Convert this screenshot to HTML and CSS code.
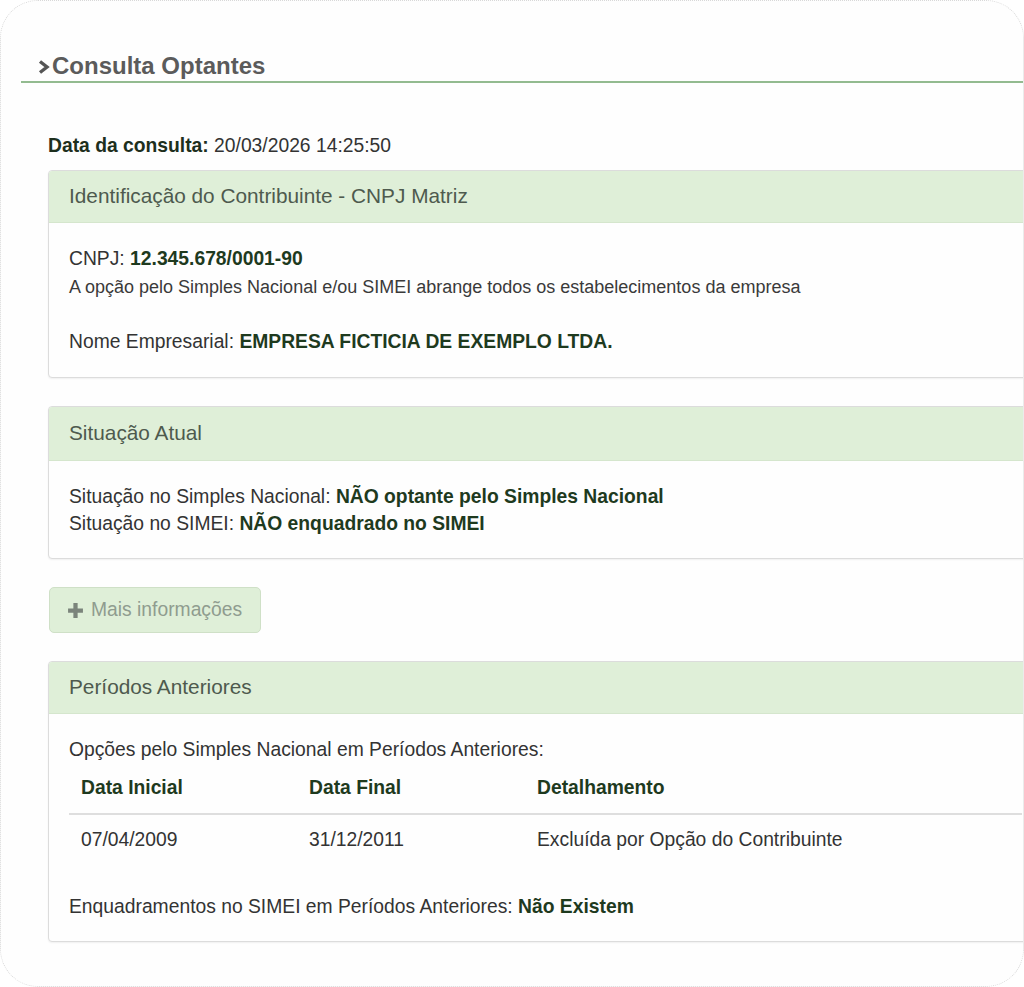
FILE: index.html
```html
<!doctype html>
<html>
  <head>
    <title>Consulta Optantes</title>
    <link rel="stylesheet" href="styles.css">
  </head>
  <body>
    <div class="frame">
      <h1 class="page-title">
        <svg class="chevron" width="12" height="16" viewBox="0 0 12 16"><path d="M2 2.5l7 5.5-7 5.5" fill="none" stroke="#555" stroke-width="3.4" stroke-linejoin="miter"/></svg>Consulta Optantes
      </h1>

      <div class="content">
        <p class="query-date"><b>Data da consulta:</b> 20/03/2026 14:25:50</p>

        <div class="panel">
          <div class="panel-heading">Identificação do Contribuinte - CNPJ Matriz</div>
          <div class="panel-body first">
            <p>CNPJ: <b>12.345.678/0001-90</b></p>
            <p class="note">A opção pelo Simples Nacional e/ou SIMEI abrange todos os estabelecimentos da empresa</p>
            <p class="spaced">Nome Empresarial: <b>EMPRESA FICTICIA DE EXEMPLO LTDA.</b></p>
          </div>
        </div>

        <div class="panel">
          <div class="panel-heading tall">Situação Atual</div>
          <div class="panel-body">
            <p>Situação no Simples Nacional: <b>NÃO optante pelo Simples Nacional</b></p>
            <p>Situação no SIMEI: <b>NÃO enquadrado no SIMEI</b></p>
          </div>
        </div>

        <button class="btn-more">
          <svg width="17" height="17" viewBox="0 0 16 16"><path d="M6 1h4v5h5v4h-5v5H6v-5H1V6h5z" fill="#7b847b"/></svg>
          Mais informações
        </button>

        <div class="panel">
          <div class="panel-heading">Períodos Anteriores</div>
          <div class="panel-body">
            <p>Opções pelo Simples Nacional em Períodos Anteriores:</p>
            <table class="periods">
              <thead>
                <tr><th>Data Inicial</th><th>Data Final</th><th>Detalhamento</th></tr>
              </thead>
              <tbody>
                <tr><td>07/04/2009</td><td>31/12/2011</td><td>Excluída por Opção do Contribuinte</td></tr>
              </tbody>
            </table>
            <p>Enquadramentos no SIMEI em Períodos Anteriores: <b>Não Existem</b></p>
          </div>
        </div>
      </div>
    </div>
  </body>
</html>
```

FILE: styles.css
```css
* { margin: 0; padding: 0; box-sizing: border-box; }
html, body { background: #fff; }
body { font: 19.3px "Liberation Sans", Arial, Helvetica, sans-serif; color: #333; overflow: hidden; }

.frame { height: 987px; width: 1024px; border: 1px dotted #d8d8d8; border-radius: 38px; background: #fefefe; padding-top: 52px; overflow: hidden; }

.page-title { display: flex; align-items: flex-start; margin-left: 20px; padding-left: 17px; font-size: 24px; color: #5b5b5b; border-bottom: 2px solid #93bb90; height: 30px; line-height: 26px; }
.chevron { margin: 6px 2px 0 0; }

.content { padding: 49px 0 0 47px; margin-right: -20px; }
.query-date { line-height: 27px; margin-bottom: 11px; }
.query-date b { color: #1d2f1d; }

.panel { background: #fefefe; border: 1px solid #dcdcdc; border-radius: 4px; box-shadow: 0 1px 2px rgba(0,0,0,0.06); margin-bottom: 28px; }
.panel-heading { display: flex; align-items: center; background: #dfefd8; color: #4e5a4e; font-size: 20.8px; padding: 0 20px 2px 20px; border-bottom: 1px solid #d5e6cd; border-radius: 3px 3px 0 0; height: 52px; }
.panel-heading.tall { height: 54px; }
.panel-body { padding: 22px 20px 21px 20px; line-height: 27px; }
.panel-body.first { padding-bottom: 22px; }
.panel-body b { color: #1e3a1e; }
.note { font-size: 18px; line-height: 31px; color: #3a3a3a; }
.spaced { margin-top: 25px; }

.btn-more { display: flex; align-items: center; gap: 7px; font: 19.3px "Liberation Sans", Arial, sans-serif; color: #8f9c8f; background: #dfefd8; border: 1px solid #cfe0c7; border-radius: 5px; width: 212px; height: 46px; padding-left: 17px; margin: 2px 0 28px 1px; }

.periods { border-collapse: collapse; width: 100%; margin: 11px 0 28px 0; }
.periods th { text-align: left; color: #1e3a1e; font-weight: bold; padding: 0 12px 12px 12px; border-bottom: 2px solid #dedede; width: 228px; }
.periods th:last-child, .periods td:last-child { width: auto; }
.periods td { padding: 11px 12px 12px 12px; }
```
